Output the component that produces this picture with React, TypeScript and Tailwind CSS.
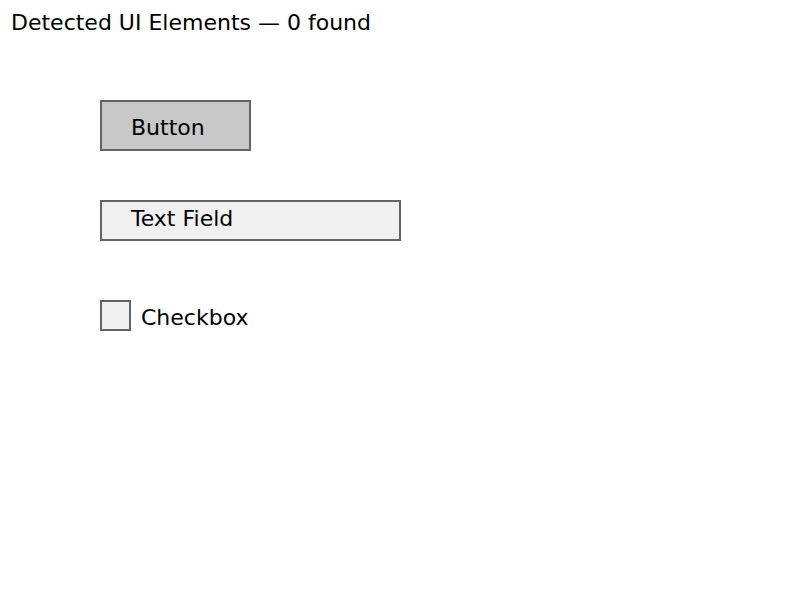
import React from "react";

export default function App() {
  const font = { fontFamily: '"DejaVu Sans", "Liberation Sans", sans-serif' };
  return (
    <div className="w-[800px] h-[600px] bg-white text-black" style={font}>
      <div className="pl-[11px] pt-[12px] text-[22px] leading-[22px] whitespace-nowrap">
        Detected UI Elements — 0 found
      </div>
      <div className="flex flex-col items-start pl-[100px]">
        <div className="mt-[66px] w-[151px] h-[51px] border-2 border-[#646464] bg-[#c8c8c8] pl-[29px] pt-[15px] text-[22px] leading-[22px]">
          Button
        </div>
        <div className="mt-[49px] w-[301px] h-[41px] border-2 border-[#646464] bg-[#f0f0f0] pl-[29px] pt-[6px] text-[22px] leading-[22px]">
          Text Field
        </div>
        <div className="mt-[59px] flex items-start">
          <div className="w-[31px] h-[31px] border-2 border-[#646464] bg-[#f0f0f0]" />
          <div className="ml-[10px] mt-[7px] text-[22px] leading-[22px]">Checkbox</div>
        </div>
      </div>
    </div>
  );
}
